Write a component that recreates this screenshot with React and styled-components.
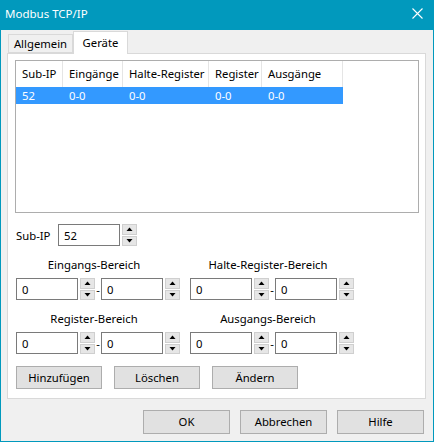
import styled, { createGlobalStyle } from "styled-components";

const GlobalStyle = createGlobalStyle`
  html, body {
    margin: 0;
    padding: 0;
    background: #ffffff;
  }
  body {
    font-family: "Noto Sans", "Open Sans", sans-serif;
    font-size: 11.3px;
    color: #000000;
  }
  * {
    box-sizing: border-box;
  }
`;

const columns = [
  { title: "Sub-IP", width: 47 },
  { title: "Eingänge", width: 60 },
  { title: "Halte-Register", width: 86 },
  { title: "Register", width: 53 },
  { title: "Ausgänge", width: 81 },
];

const rows = [["52", "0-0", "0-0", "0-0", "0-0"]];

const gridCols = columns.map((c) => `${c.width}px`).join(" ");

function ArrowIcon({ down }) {
  return (
    <svg width="7" height="4" viewBox="0 0 7 4">
      {down ? (
        <polygon points="0.5,0 6.5,0 3.5,3.5" fill="#000" />
      ) : (
        <polygon points="0.5,4 6.5,4 3.5,0.5" fill="#000" />
      )}
    </svg>
  );
}

function SpinBox({ value }) {
  return (
    <SpinWrap>
      <StyledInput>{value}</StyledInput>
      <Spinner>
        <SpinButton>
          <ArrowIcon />
        </SpinButton>
        <SpinButton>
          <ArrowIcon down />
        </SpinButton>
      </Spinner>
    </SpinWrap>
  );
}

function RangeGroup({ label }) {
  return (
    <StyledGroup>
      <StyledGroupLabel>{label}</StyledGroupLabel>
      <StyledRangeRow>
        <SpinBox value="0" />
        <StyledDash>-</StyledDash>
        <SpinBox value="0" />
      </StyledRangeRow>
    </StyledGroup>
  );
}

export default function App() {
  return (
    <>
      <GlobalStyle />
      <StyledWindow>
        <StyledTitleBar>
          <span>Modbus TCP/IP</span>
          <svg width="11" height="11" viewBox="0 0 11 11">
            <path d="M0.5 0.5 L10.5 10.5 M10.5 0.5 L0.5 10.5" stroke="#fff" strokeWidth="1.1" />
          </svg>
        </StyledTitleBar>

        <StyledTabRow>
          <StyledTab>Allgemein</StyledTab>
          <StyledTab $active>Geräte</StyledTab>
        </StyledTabRow>

        <StyledPanel>
          <StyledList>
            <StyledListHeader>
              {columns.map((c) => (
                <StyledHeaderCell key={c.title}>{c.title}</StyledHeaderCell>
              ))}
            </StyledListHeader>
            {rows.map((r, i) => (
              <StyledListRow key={i} $selected>
                {r.map((cell, j) => (
                  <StyledCell key={j}>{cell}</StyledCell>
                ))}
              </StyledListRow>
            ))}
          </StyledList>

          <StyledSubIpRow>
            <StyledSubIpLabel>Sub-IP</StyledSubIpLabel>
            <SpinBox value="52" />
          </StyledSubIpRow>

          <StyledGroupGrid>
            <RangeGroup label="Eingangs-Bereich" />
            <RangeGroup label="Halte-Register-Bereich" />
          </StyledGroupGrid>
          <StyledGroupGrid>
            <RangeGroup label="Register-Bereich" />
            <RangeGroup label="Ausgangs-Bereich" />
          </StyledGroupGrid>

          <StyledPanelButtons>
            <StyledButton $w={86} $h={23}>Hinzufügen</StyledButton>
            <StyledButton $w={86} $h={23}>Löschen</StyledButton>
            <StyledButton $w={86} $h={23}>Ändern</StyledButton>
          </StyledPanelButtons>
        </StyledPanel>

        <StyledFooter>
          <StyledButton $w={87} $h={24}>OK</StyledButton>
          <StyledButton $w={87} $h={24}>Abbrechen</StyledButton>
          <StyledButton $w={87} $h={24}>Hilfe</StyledButton>
        </StyledFooter>
      </StyledWindow>
    </>
  );
}

const StyledWindow = styled.div`
  width: 434px;
  height: 442px;
  background: #f0f0f0;
  border: 1px solid #0199bd;
  border-top: none;
  display: flex;
  flex-direction: column;
`;

const StyledTitleBar = styled.div`
  height: 30px;
  margin: 0 -1px;
  background: #0199bd;
  color: #ffffff;
  display: flex;
  align-items: center;
  justify-content: space-between;
  padding: 0 11px 3px 5px;
  font-size: 11.5px;
`;

const StyledTabRow = styled.div`
  height: 22px;
  margin: 1px 0 0 7px;
  display: flex;
  align-items: flex-end;
`;

const StyledTab = styled.div`
  position: relative;
  z-index: 1;
  width: ${(p) => (p.$active ? "55px" : "65px")};
  height: ${(p) => (p.$active ? "23px" : "19px")};
  margin-bottom: ${(p) => (p.$active ? "-1px" : "0")};
  background: ${(p) => (p.$active ? "#ffffff" : "#f0f0f0")};
  border: 1px solid #d9d9d9;
  border-bottom: ${(p) => (p.$active ? "none" : "1px solid #d9d9d9")};
  display: flex;
  align-items: center;
  justify-content: center;
  padding-bottom: ${(p) => (p.$active ? "2px" : "0")};
`;

const StyledPanel = styled.div`
  margin: 0 7px 0 6px;
  height: 346px;
  background: #ffffff;
  border: 1px solid #d9d9d9;
  padding: 6px 6px 0 7px;
  display: flex;
  flex-direction: column;
`;

const StyledList = styled.div`
  width: 404px;
  height: 153px;
  border: 1px solid #adadad;
  background: #ffffff;
  flex-shrink: 0;
`;

const StyledListHeader = styled.div`
  display: grid;
  grid-template-columns: ${gridCols};
  height: 26px;
`;

const StyledHeaderCell = styled.div`
  border-right: 1px solid #e5e5e5;
  padding-left: 6px;
  display: flex;
  align-items: center;
  white-space: nowrap;
  overflow: hidden;
  padding-bottom: 2px;
`;

const StyledListRow = styled.div`
  display: grid;
  grid-template-columns: ${gridCols};
  width: max-content;
  height: 17px;
  background: ${(p) => (p.$selected ? "#3399ff" : "transparent")};
  color: ${(p) => (p.$selected ? "#ffffff" : "#000000")};
`;

const StyledCell = styled.div`
  padding-left: 6px;
  display: flex;
  align-items: center;
  white-space: nowrap;
`;

const StyledSubIpRow = styled.div`
  display: flex;
  align-items: center;
  margin: 11px 0 0 1px;
`;

const StyledSubIpLabel = styled.div`
  width: 42px;
`;

const SpinWrap = styled.div`
  display: flex;
  align-items: center;
`;

const StyledInput = styled.div`
  width: 62px;
  height: 22px;
  border: 1px solid #7a7a7a;
  background: #ffffff;
  padding-left: 5px;
  display: flex;
  align-items: center;
`;

const Spinner = styled.div`
  width: 15px;
  height: 22px;
  margin-left: 2px;
  display: flex;
  flex-direction: column;
  gap: 1px;
`;

const SpinButton = styled.div`
  flex: 1;
  background: #e6e6e6;
  border: 1px solid #cfcfcf;
  display: flex;
  align-items: center;
  justify-content: center;
`;

const StyledGroupGrid = styled.div`
  display: flex;
  gap: 10px;
  margin: 11px 0 0 1px;
`;

const StyledGroup = styled.div`
  display: flex;
  flex-direction: column;
  width: 164px;
`;

const StyledGroupLabel = styled.div`
  height: 16px;
  margin-bottom: 5px;
  padding-right: 8px;
  text-align: center;
  line-height: 16px;
  white-space: nowrap;
`;

const StyledRangeRow = styled.div`
  display: flex;
  align-items: center;
`;

const StyledDash = styled.div`
  width: 6px;
  text-align: center;
`;

const StyledPanelButtons = styled.div`
  display: flex;
  gap: 12px;
  margin: 12px 0 0 1px;
`;

const StyledButton = styled.div`
  width: ${(p) => p.$w}px;
  height: ${(p) => p.$h}px;
  background: #e1e1e1;
  border: 1px solid #adadad;
  display: flex;
  align-items: center;
  justify-content: center;
  padding-bottom: 1px;
`;

const StyledFooter = styled.div`
  display: flex;
  justify-content: flex-end;
  gap: 10px;
  margin-top: 11px;
  padding-right: 9px;
`;
